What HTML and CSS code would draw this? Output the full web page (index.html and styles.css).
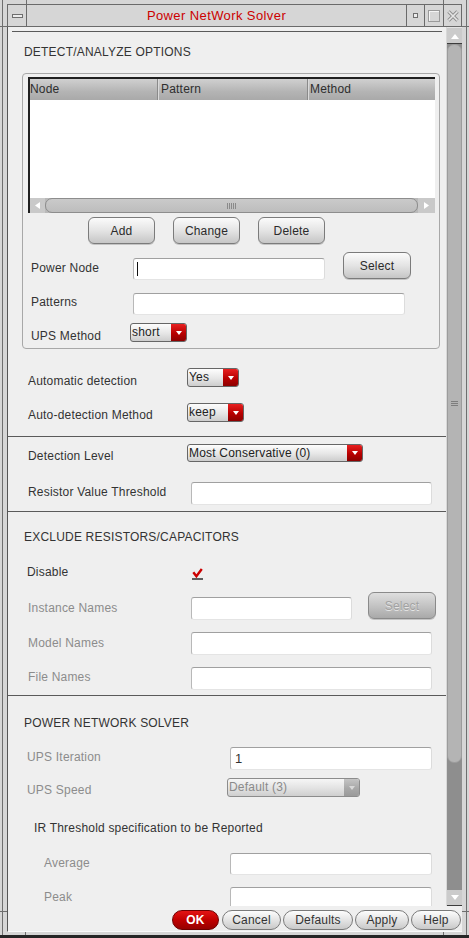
FILE: index.html
```html
<!DOCTYPE html>
<html>
<head>
<meta charset="utf-8">
<title>Power NetWork Solver</title>
<link rel="stylesheet" href="styles.css">
</head>
<body>
<div class="window">
  <span class="mark mark-t1"></span><span class="mark mark-t2"></span>
  <span class="mark mark-b1"></span><span class="mark mark-b2"></span>
  <span class="mark mark-l1"></span><span class="mark mark-l2"></span>
  <span class="mark mark-r1"></span><span class="mark mark-r2"></span>
  <div class="titlebar">
    <div class="tb-cell tb-menu"><span class="menu-glyph"></span></div>
    <div class="tb-cell tb-title">Power NetWork Solver</div>
    <div class="tb-cell tb-min"><span class="min-glyph"></span></div>
    <div class="tb-cell tb-max"><span class="max-glyph"></span></div>
    <div class="tb-cell tb-close">
      <svg width="12" height="12" viewBox="0 0 12 12"><path d="M1.5 1.5 L10.5 10.5 M10.5 1.5 L1.5 10.5" stroke="#8e8e8e" stroke-width="3.4" fill="none"/><path d="M1.5 1.5 L10.5 10.5 M10.5 1.5 L1.5 10.5" stroke="#e6e6e6" stroke-width="1.6" fill="none"/></svg>
    </div>
  </div>
  <div class="content">
    <div class="scroll-area">
      <div class="scroll-content">
        <div class="rule rule-top"></div>
        <div class="sec-title sec-detect">DETECT/ANALYZE OPTIONS</div>
        <div class="group">
          <div class="table">
            <div class="thead">
              <div class="th th-node">Node</div>
              <div class="th th-pattern">Pattern</div>
              <div class="th th-method">Method</div>
            </div>
            <div class="tbody"></div>
            <div class="hscroll">
              <div class="hs-btn hs-left"><svg width="6" height="7" viewBox="0 0 6 7"><polygon points="5,0 5,7 0,3.5" fill="#fff"/></svg></div>
              <div class="hs-thumb"><span class="grip-h"><i></i><i></i><i></i><i></i><i></i></span></div>
              <div class="hs-btn hs-right"><svg width="6" height="7" viewBox="0 0 6 7"><polygon points="0,0 0,7 5,3.5" fill="#fff"/></svg></div>
            </div>
          </div>
          <div class="btn-row">
            <div class="btn btn-sm">Add</div>
            <div class="btn btn-sm">Change</div>
            <div class="btn btn-sm">Delete</div>
          </div>
          <div class="row row-power">
            <span class="lbl lbl-power">Power Node</span>
            <div class="inp inp-power"><span class="caret"></span></div>
            <div class="btn btn-select">Select</div>
          </div>
          <div class="row row-patterns">
            <span class="lbl lbl-patterns">Patterns</span>
            <div class="inp inp-patterns"></div>
          </div>
          <div class="row row-upsmethod">
            <span class="lbl lbl-upsmethod">UPS Method</span>
            <div class="dd dd-short"><span class="dd-text">short</span><span class="dd-arrow"></span></div>
          </div>
        </div>

        <div class="row row-autodet">
          <span class="lbl lbl-autodet">Automatic detection</span>
          <div class="dd dd-yes"><span class="dd-text">Yes</span><span class="dd-arrow"></span></div>
        </div>
        <div class="row row-automethod">
          <span class="lbl lbl-autodet lbl-automethod">Auto-detection Method</span>
          <div class="dd dd-keep"><span class="dd-text">keep</span><span class="dd-arrow"></span></div>
        </div>
        <div class="rule rule-full rule-1"></div>

        <div class="row row-detlevel">
          <span class="lbl lbl-autodet lbl-detlevel">Detection Level</span>
          <div class="dd dd-level"><span class="dd-text">Most Conservative (0)</span><span class="dd-arrow"></span></div>
        </div>
        <div class="row row-resistor">
          <span class="lbl lbl-wide lbl-resistor">Resistor Value Threshold</span>
          <div class="inp inp-long"></div>
        </div>
        <div class="rule rule-full rule-2"></div>

        <div class="sec-title sec-exclude">EXCLUDE RESISTORS/CAPACITORS</div>
        <div class="row row-disable">
          <span class="lbl lbl-disable">Disable</span>
          <svg class="check" width="11" height="13" viewBox="0 0 11 13"><path d="M1.3 5.2 L4.4 9.2 L9.8 2" stroke="#cc0000" stroke-width="2.4" fill="none"/><line x1="0" y1="12" x2="11" y2="12" stroke="#3a3a3a" stroke-width="1.6"/></svg>
        </div>
        <div class="row row-instance">
          <span class="lbl lbl-wide dis lbl-instance">Instance Names</span>
          <div class="inp inp-instance"></div>
          <div class="btn btn-select btn-dis">Select</div>
        </div>
        <div class="row row-model">
          <span class="lbl lbl-wide dis lbl-model">Model Names</span>
          <div class="inp inp-long"></div>
        </div>
        <div class="row row-file">
          <span class="lbl lbl-wide dis lbl-file">File Names</span>
          <div class="inp inp-long"></div>
        </div>
        <div class="rule rule-full rule-3"></div>

        <div class="sec-title sec-power">POWER NETWORK SOLVER</div>
        <div class="row row-upsiter">
          <span class="lbl dis lbl-upsiter">UPS Iteration</span>
          <div class="inp inp-solver"><span class="inp-val">1</span></div>
        </div>
        <div class="row row-upsspeed">
          <span class="lbl dis lbl-upsspeed">UPS Speed</span>
          <div class="dd dd-dis dd-speed"><span class="dd-text">Default (3)</span><span class="dd-arrow"></span></div>
        </div>
        <div class="sub-title">IR Threshold specification to be Reported</div>
        <div class="row row-average">
          <span class="lbl dis lbl-ir">Average</span>
          <div class="inp inp-solver inp-ir"></div>
        </div>
        <div class="row row-peak">
          <span class="lbl dis lbl-ir">Peak</span>
          <div class="inp inp-solver inp-ir"></div>
        </div>
      </div>
      <div class="vscroll">
        <div class="vs-btn vs-up"><svg width="8" height="5" viewBox="0 0 8 5"><polygon points="0,5 8,5 4,0" fill="#fff"/></svg></div>
        <div class="vs-thumb"><span class="grip-v"><i></i><i></i><i></i></span></div>
        <div class="vs-trough"></div>
        <div class="vs-btn vs-down"><svg width="8" height="5" viewBox="0 0 8 5"><polygon points="0,0 8,0 4,5" fill="#fff"/></svg></div>
      </div>
    </div>
    <div class="bottom-bar">
      <div class="pbtn pbtn-ok">OK</div>
      <div class="pbtn pbtn-cancel">Cancel</div>
      <div class="pbtn pbtn-defaults">Defaults</div>
      <div class="pbtn pbtn-apply">Apply</div>
      <div class="pbtn pbtn-help">Help</div>
    </div>
  </div>
</div>
</body>
</html>
```

FILE: styles.css
```css
* { box-sizing: border-box; }
html, body { margin: 0; padding: 0; }
body {
  width: 469px; height: 938px; overflow: hidden;
  background: #d6d6d6;
  font-family: "Liberation Sans", Arial, sans-serif;
  font-size: 12px; letter-spacing: 0.2px; color: #333;
}

/* window frame */
.window {
  position: relative;
  width: 469px; height: 938px;
  background: #d6d6d6;
  padding: 4px 7px 3px 7px;
  border-bottom: 3px solid #262626;
  box-shadow: inset 2px 0 0 #d6d6d6, inset 3px 0 0 #6e6e6e,
              inset -2px 0 0 #d6d6d6, inset -3px 0 0 #6e6e6e;
  display: flex; flex-direction: column;
}
.mark { position: absolute; background: #6e6e6e; }
.mark-t1 { left: 26px; top: 0; width: 1px; height: 4px; }
.mark-t2 { left: 443px; top: 0; width: 1px; height: 4px; }
.mark-b1 { left: 25px; top: 932px; width: 1px; height: 3px; }
.mark-b2 { left: 443px; top: 932px; width: 1px; height: 3px; }
.mark-l1 { left: 0; top: 26px; width: 7px; height: 1px; }
.mark-l2 { left: 0; top: 911px; width: 7px; height: 1px; }
.mark-r1 { left: 462px; top: 26px; width: 7px; height: 1px; }
.mark-r2 { left: 462px; top: 911px; width: 7px; height: 1px; }

.titlebar {
  height: 23px; flex: none;
  display: flex;
  border: 1px solid #6a6a6a;
  background: #d6d6d6;
}
.tb-cell {
  border-left: 1px solid #6a6a6a;
  display: flex; align-items: center; justify-content: center;
}
.tb-menu { width: 18px; border-left: none; }
.tb-title { width: 380px; color: #cc0000; font-size: 13px; letter-spacing: 0.4px; }
.tb-min { width: 18px; }
.tb-max { width: 19px; }
.tb-close { width: 18px; }
.menu-glyph { width: 11px; height: 4px; border: 1px solid #6e6e6e; background: #ececec; }
.min-glyph { width: 5px; height: 5px; border: 1px solid #6e6e6e; background: #ececec; }
.max-glyph { width: 12px; height: 12px; border: 1px solid #9a9a9a; box-shadow: inset 1px 1px 0 #f4f4f4; }

/* content */
.content {
  height: 905px; flex: none;
  border-left: 1px solid #555;
  border-bottom: 1px solid #fafafa;
  background: #efefef;
  display: flex; flex-direction: column;
}
.scroll-area { height: 879px; display: flex; flex: none; }
.scroll-content { width: 438px; overflow: hidden; flex: none; }

.rule { border-top: 1px solid #5a5a5a; }
.rule-top { margin: 4px 4px 0 4px; }
.rule-1 { margin-top: 14px; }
.rule-2 { margin-top: 6px; }
.rule-3 { margin-top: 5px; }

.sec-title { line-height: 14px; height: 14px; padding-left: 16px; color: #333; white-space: nowrap; }
.sec-detect { margin-top: 13px; }
.sec-exclude { margin-top: 18px; }
.sec-power { margin-top: 20px; }
.sub-title { line-height: 14px; height: 14px; padding-left: 26px; margin-top: 24px; color: #333; white-space: nowrap; }

/* group box */
.group {
  margin: 14px 6px 0 14px;
  height: 276px;
  border: 1px solid #a8a8a8;
  border-radius: 4px;
  padding: 3px 4px 0 5px;
}
.table {
  height: 136px;
  border-top: 2px solid #1f1f1f;
  border-left: 2px solid #1f1f1f;
  display: flex; flex-direction: column;
  background: #fff;
}
.thead { height: 21px; flex: none; display: flex; background: linear-gradient(#d0d0d0, #b4b4b4 60%, #a9a9a9); }
.th { line-height: 21px; color: #2e2e2e; white-space: nowrap; }
.th-node { width: 127px; }
.th-pattern { width: 150px; border-left: 1px solid #8a8a8a; box-shadow: inset 1px 0 0 #dadada; padding-left: 3px; }
.th-method { flex: 1; border-left: 1px solid #8a8a8a; box-shadow: inset 1px 0 0 #dadada; padding-left: 2px; }
.tbody { flex: 1; background: #fff; }
.hscroll { height: 15px; flex: none; display: flex; background: #b9b9b9; }
.hs-btn { display: flex; align-items: center; justify-content: center; background: #c9c9c9; }
.hs-left { width: 15px; }
.hs-right { flex: 1; }
.hs-thumb {
  width: 373px;
  border: 1px solid #8d8d8d; border-radius: 7px;
  background: linear-gradient(#cacaca, #bdbdbd);
  display: flex; align-items: center; justify-content: center;
}
.grip-h { display: flex; gap: 1px; }
.grip-h i { display: block; width: 1px; height: 6px; background: #8a8a8a; }

/* buttons */
.btn-row { display: flex; gap: 18px; margin-top: 4px; padding-left: 60px; }
.btn {
  height: 27px; flex: none;
  border: 1px solid #7b7b7b; border-radius: 6px;
  background: linear-gradient(#fbfbfb, #e4e4e4 50%, #c6c6c6);
  box-shadow: 0 1px 0 #c4c4c4;
  display: flex; align-items: center; justify-content: center;
  color: #2b2b2b; white-space: nowrap;
}
.btn-sm { width: 67px; }
.btn-select { width: 68px; margin-left: 18px; }
.btn-dis {
  margin-left: 16px;
  background: linear-gradient(#dedede, #c4c4c4 50%, #a9a9a9);
  border-color: #8a8a8a;
  color: #a2a2a2;
  text-shadow: 0 1px 0 #e6e6e6;
}

/* rows: fixed heights equal to the tallest control */
.row { display: flex; align-items: flex-start; }
.lbl { line-height: 14px; height: 14px; white-space: nowrap; flex: none; color: #333; }
.dis { color: #8c8c8c; }

.row-power { margin-top: 8px; height: 28px; padding-left: 3px; }
.lbl-power { width: 102px; margin-top: 9px; }
.row-patterns { margin-top: 13px; height: 22px; padding-left: 3px; }
.lbl-patterns { width: 102px; margin-top: 2px; }
.row-upsmethod { margin-top: 8px; height: 19px; padding-left: 3px; }
.lbl-upsmethod { width: 99px; margin-top: 6px; }

.row-autodet { margin-top: 19px; height: 19px; padding-left: 20px; }
.lbl-autodet { width: 159px; margin-top: 6px; }
.row-automethod { margin-top: 16px; height: 19px; padding-left: 20px; }
.lbl-automethod { margin-top: 5px; }
.row-detlevel { margin-top: 7px; height: 18px; padding-left: 20px; }
.lbl-detlevel { margin-top: 5px; }
.row-resistor { margin-top: 20px; height: 23px; padding-left: 20px; }
.lbl-wide { width: 163px; }
.lbl-resistor { margin-top: 3px; }

.row-disable { margin-top: 21px; height: 15px; padding-left: 19px; }
.lbl-disable { width: 165px; }
.check { display: block; margin-top: 2px; flex: none; }
.row-instance { margin-top: 12px; height: 28px; padding-left: 20px; }
.lbl-instance { margin-top: 9px; }
.row-model { margin-top: 12px; height: 23px; padding-left: 20px; }
.lbl-model { margin-top: 4px; }
.row-file { margin-top: 12px; height: 23px; padding-left: 20px; }
.lbl-file { margin-top: 3px; }

.row-upsiter { margin-top: 17px; height: 23px; padding-left: 19px; }
.lbl-upsiter { width: 203px; margin-top: 3px; }
.row-upsspeed { margin-top: 8px; height: 19px; padding-left: 19px; }
.lbl-upsspeed { width: 200px; margin-top: 5px; }
.row-average { margin-top: 18px; height: 22px; padding-left: 36px; }
.row-peak { margin-top: 12px; height: 22px; padding-left: 36px; }
.lbl-ir { width: 186px; margin-top: 3px; }

/* inputs */
.inp {
  flex: none;
  height: 23px;
  background: #fff;
  border: 1px solid;
  border-color: #a0a0a0 #dcdcdc #e4e4e4 #b8b8b8;
  border-radius: 3px;
  display: flex; align-items: center;
}
.inp-power { width: 192px; height: 22px; margin-top: 6px; }
.caret { display: block; width: 1px; height: 14px; background: #111; margin-left: 3px; }
.inp-patterns { width: 272px; height: 22px; }
.inp-long { width: 241px; }
.inp-instance { width: 161px; margin-top: 5px; }
.inp-solver { width: 202px; }
.inp-ir { height: 22px; }
.inp-val { padding-left: 4px; color: #333; font-size: 13px; }

/* dropdowns */
.dd {
  flex: none;
  display: flex;
  height: 19px;
  border: 1px solid #666;
  border-radius: 3px;
  overflow: hidden;
  background: linear-gradient(#fdfdfd, #e6e6e6 55%, #cdcdcd);
}
.dd-text { flex: 1; line-height: 16px; padding-left: 1px; color: #222; white-space: nowrap; }
.dd-arrow {
  width: 15px; flex: none;
  background: linear-gradient(#e82020, #b80000 55%, #8c0000);
  display: flex; align-items: center; justify-content: center;
}
.dd-arrow::after {
  content: "";
  border-left: 3px solid transparent;
  border-right: 3px solid transparent;
  border-top: 4px solid #fff;
}
.dd-short { width: 57px; }
.dd-yes { width: 52px; }
.dd-keep { width: 57px; }
.dd-level { width: 176px; height: 18px; }
.dd-dis { border-color: #8c8c8c; background: linear-gradient(#f6f6f6, #e2e2e2 55%, #cfcfcf); }
.dd-dis .dd-text { color: #8a8a8a; }
.dd-dis .dd-arrow { background: linear-gradient(#c4c4c4, #a8a8a8 55%, #9a9a9a); }
.dd-dis .dd-arrow::after { border-top-color: #d8d8d8; }
.dd-speed { width: 133px; }

/* vertical scrollbar */
.vscroll {
  width: 16px; flex: none;
  display: flex; flex-direction: column;
  background: #8e8e8e;
  border-left: 1px solid #d8d8d8;
}
.vs-btn { flex: none; display: flex; align-items: center; justify-content: center; background: #cbcbcb; }
.vs-up { height: 17px; border-top: 1px solid #e4e4e4; border-bottom: 1px solid #3c3c3c; padding-top: 1px; }
.vs-down { height: 16px; border-bottom: 1px solid #3c3c3c; }
.vs-thumb {
  height: 719px; flex: none;
  background: #b4b4b4;
  border: 1px solid #9c9c9c;
  border-radius: 7px;
  display: flex; align-items: center; justify-content: center;
}
.grip-v { display: flex; flex-direction: column; gap: 1px; }
.grip-v i { display: block; width: 7px; height: 1px; background: #7e7e7e; }
.vs-trough { flex: 1; }

/* bottom bar */
.bottom-bar {
  height: 25px; flex: none;
  display: flex; justify-content: flex-end; align-items: flex-start;
  padding: 4px 1px 0 0;
}
.pbtn {
  height: 20px; flex: none;
  border: 1px solid #7a7a7a; border-radius: 10px;
  background: linear-gradient(#fdfdfd, #e4e4e4 50%, #c9c9c9);
  display: flex; align-items: center; justify-content: center;
  color: #333; white-space: nowrap;
  margin-left: 2px;
}
.pbtn-ok {
  width: 47px; margin-left: 0;
  background: linear-gradient(#e41414, #c00000 50%, #960000);
  border-color: #6e0000;
  color: #fff; font-weight: bold;
}
.pbtn-cancel { width: 59px; margin-left: 3px; }
.pbtn-defaults { width: 70px; }
.pbtn-apply { width: 54px; }
.pbtn-help { width: 50px; }
```
